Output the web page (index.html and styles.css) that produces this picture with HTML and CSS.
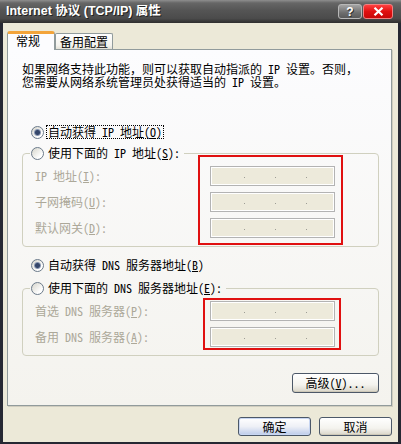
FILE: index.html
```html
<!DOCTYPE html>
<html>
<head>
  <meta charset="utf-8"/>
  <title>Internet 协议 (TCP/IP) 属性</title>
  <link rel="stylesheet" href="styles.css">
</head>
<body>
  <div class="window">
    <div class="titlebar">
      <span class="title">Internet 协议 (TCP/IP) 属性</span>
      <div class="caption-buttons">
        <span class="cap-btn help">?</span>
        <span class="cap-btn close">
          <svg width="11" height="9" viewBox="0 0 11 9"><path d="M1.5 0.8 L9.5 8.2 M9.5 0.8 L1.5 8.2" stroke="#fff" stroke-width="2.2" fill="none"/></svg>
        </span>
      </div>
    </div>

    <div class="client">
      <div class="tabs">
        <div class="tab active">常规</div>
        <div class="tab">备用配置</div>
      </div>

      <div class="panel">
        <p class="intro">如果网络支持此功能，则可以获取自动指派的 IP 设置。否则，<br>您需要从网络系统管理员处获得适当的 IP 设置。</p>

        <div class="radio-row first">
          <span class="radio checked"></span>
          <span class="radio-text focus">自动获得 IP 地址(<u>O</u>)</span>
        </div>

        <fieldset class="group">
          <legend class="radio-row">
            <span class="radio"></span>
            <span class="radio-text">使用下面的 IP 地址(<u>S</u>):</span>
          </legend>
          <div class="fields">
            <div class="labels">
              <span>IP 地址(<u>I</u>):</span>
              <span>子网掩码(<u>U</u>):</span>
              <span>默认网关(<u>D</u>):</span>
            </div>
            <div class="inputs">
              <div class="ip-box"><i></i><i></i><i></i></div>
              <div class="ip-box"><i></i><i></i><i></i></div>
              <div class="ip-box"><i></i><i></i><i></i></div>
              <div class="mark mark-ip"></div>
            </div>
          </div>
        </fieldset>

        <div class="radio-row dns-auto">
          <span class="radio checked"></span>
          <span class="radio-text">自动获得 DNS 服务器地址(<u>B</u>)</span>
        </div>

        <fieldset class="group dns">
          <legend class="radio-row">
            <span class="radio"></span>
            <span class="radio-text">使用下面的 DNS 服务器地址(<u>E</u>):</span>
          </legend>
          <div class="fields">
            <div class="labels">
              <span>首选 DNS 服务器(<u>P</u>):</span>
              <span>备用 DNS 服务器(<u>A</u>):</span>
            </div>
            <div class="inputs">
              <div class="ip-box"><i></i><i></i><i></i></div>
              <div class="ip-box"><i></i><i></i><i></i></div>
              <div class="mark mark-dns"></div>
            </div>
          </div>
        </fieldset>

        <div class="advanced-row">
          <button class="btn advanced">高级(<u>V</u>)...</button>
        </div>
      </div>

      <div class="dialog-buttons">
        <button class="btn default">确定</button>
        <button class="btn">取消</button>
      </div>
    </div>
  </div>
</body>
</html>
```

FILE: styles.css
```css
body {
  margin: 0;
  font-family: "Noto Sans Mono CJK SC", "Noto Sans CJK SC", sans-serif;
  font-size: 12px;
  color: #000;
}
.window {
  width: 401px;
  height: 444px;
  background: #262833;
  display: flex;
  flex-direction: column;
}
.titlebar {
  height: 23px;
  display: flex;
  align-items: center;
  justify-content: space-between;
  padding: 0 8px 0 6px;
  background: linear-gradient(#8e8e8e 0, #666 3px, #555 45%, #4b4b4b 80%, #2e2e2e 100%);
}
.title {
  font-family: "Liberation Sans", "Noto Sans CJK SC", sans-serif;
  font-weight: bold;
  font-size: 12.5px;
  color: #fff;
  text-shadow: 1px 1px 0 #222;
  line-height: 16px;
  margin-top: -1px;
}
.caption-buttons {
  display: flex;
  gap: 1px;
  align-self: flex-start;
  margin-top: 4px;
}
.cap-btn {
  height: 15px;
  border-radius: 3px;
  display: flex;
  align-items: center;
  justify-content: center;
  color: #fff;
  font-family: "Liberation Sans", sans-serif;
  font-weight: bold;
  font-size: 12px;
  box-sizing: border-box;
}
.help {
  width: 24px;
  border: 1px solid #b8b8b8;
  background: linear-gradient(#a4a4a4, #6e6e6e 60%, #5a5a5a);
  text-shadow: 1px 1px 0 #333;
}
.close {
  width: 30px;
  border: 1px solid #f08080;
  background: linear-gradient(#ff4040, #e01010 50%, #c80808);
}

.client {
  flex: 1;
  margin: 0 3px 2px 3px;
  background: #ece9d8;
  padding: 8px 6px 0 4px;
}
.tabs {
  display: flex;
  align-items: flex-end;
  height: 18px;
}
.tab {
  box-sizing: border-box;
  height: 16px;
  padding: 0 4px;
  border: 1px solid #919b9c;
  border-bottom: none;
  border-radius: 2px 2px 0 0;
  background: linear-gradient(#fefefe, #f4f3ee 75%, #e3e1d6);
  line-height: 15px;
  white-space: nowrap;
}
.tab.active {
  position: relative;
  z-index: 1;
  height: 19px;
  margin-bottom: -1px;
  padding: 0 14px 0 8px;
  background: #fcfcfe;
  border-top: 3px solid #f3a43a;
  border-radius: 3px 3px 0 0;
  line-height: 14px;
}

.panel {
  border: 1px solid #919b9c;
  background: linear-gradient(#fcfcfe, #f4f3ee);
  box-shadow: 1px 1px 0 #d0cdbf;
  padding: 12px 12px 12px 14px;
}
.intro {
  margin: 0;
  line-height: 13px;
  white-space: nowrap;
}
.radio-row {
  display: flex;
  align-items: center;
  height: 14px;
  padding-left: 9px;
  white-space: nowrap;
}
.radio-row.first {
  margin-top: 37px;
}
.radio-row.dns-auto {
  margin-top: 11px;
}
.radio {
  box-sizing: border-box;
  width: 13px;
  height: 13px;
  border-radius: 50%;
  border: 1px solid #6b7a8a;
  background: linear-gradient(135deg, #d6d5cc, #fff 75%);
  flex: none;
}
.radio.checked {
  background: radial-gradient(circle, #34466a 0, #34466a 2px, #8a98b2 3px, transparent 4px),
              linear-gradient(135deg, #d6d5cc, #fff 75%);
}
.radio-text {
  margin-left: 3px;
  padding: 0 1px;
  line-height: 12px;
}
.radio-text.focus {
  outline: 1px dotted #000;
}

.group {
  margin: 7px 0 0;
  padding: 0;
  border: 1px solid #d0d0bf;
  border-radius: 4px;
}
.group legend {
  margin-left: 7px;
  padding: 0 3px 0 1px;
}
.group.dns {
  margin-top: 9px;
}
.fields {
  display: flex;
  padding: 6px 43px 8px 12px;
}
.labels {
  flex: 1;
  display: flex;
  flex-direction: column;
  gap: 6px;
  color: #aca899;
  white-space: nowrap;
}
.labels span {
  line-height: 20px;
}
.inputs {
  position: relative;
  width: 125px;
  display: flex;
  flex-direction: column;
  gap: 6px;
}
.ip-box {
  box-sizing: border-box;
  height: 20px;
  border: 1px solid #b3b3b3;
  box-shadow: inset 0 0 0 1px #fff;
  background: #edeadb;
  display: flex;
  align-items: flex-end;
  gap: 30px;
  padding: 0 0 7px 33px;
}
.ip-box i {
  width: 1px;
  height: 1px;
  background: #9d9d95;
}
.mark {
  position: absolute;
  border: 2px solid #e01010;
}
.mark-ip {
  top: -11px;
  left: -12px;
  right: -8px;
  bottom: -7px;
}
.mark-dns {
  top: -3px;
  left: -7px;
  right: -6px;
  bottom: -3px;
}

.advanced-row {
  display: flex;
  justify-content: flex-end;
  margin-top: 17px;
}
.btn {
  box-sizing: border-box;
  width: 73px;
  height: 19px;
  padding: 0;
  font-family: inherit;
  font-size: 12px;
  color: #000;
  border: 1px solid #4c5868;
  border-radius: 3px;
  background: linear-gradient(#fff, #f4f3ee 60%, #d9d5c8);
  box-shadow: inset 0 -1px 0 #cdc8b8;
  line-height: 16px;
}
.btn.advanced {
  width: 87px;
  height: 20px;
}
.btn.default {
  background: linear-gradient(#fff, #eef0f6 50%, #bccbea);
  box-shadow: inset 0 0 0 1px #c8d6f2;
}
.dialog-buttons {
  display: flex;
  justify-content: flex-end;
  gap: 8px;
  margin-top: 11px;
}
```
